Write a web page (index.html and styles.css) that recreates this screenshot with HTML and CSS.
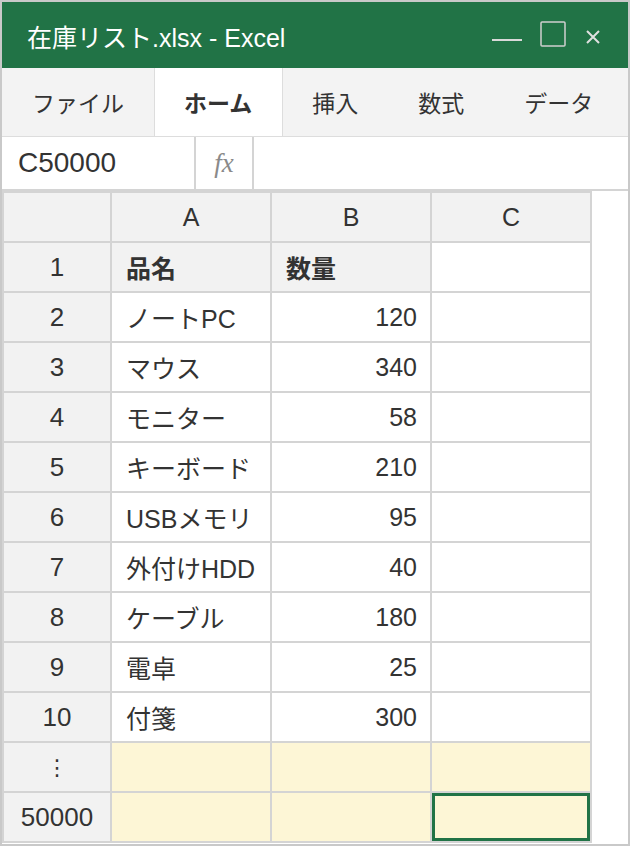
FILE: index.html
```html
<!DOCTYPE html>
<html lang="ja">
<head>
    <meta charset="UTF-8">
    <meta name="viewport" content="width=device-width, initial-scale=1.0">
    <title>在庫リスト.xlsx - Excel</title>
    <link rel="stylesheet" href="styles.css">
</head>
<body>
    <div class="window">
        <div class="titlebar">
            <span class="title">在庫リスト.xlsx - Excel</span>
            <div class="controls">
                <svg width="32" height="24" viewBox="0 0 32 24"><line x1="1" y1="17" x2="31" y2="17" stroke="#d9d9d9" stroke-width="2"/></svg>
                <svg width="26" height="26" viewBox="0 0 26 26"><rect x="1" y="1" width="24" height="24" rx="1" fill="none" stroke="#cfcfcf" stroke-width="1.5"/></svg>
                <svg width="14" height="14" viewBox="0 0 14 14"><path d="M1 1 L13 13 M13 1 L1 13" stroke="#e0e0e0" stroke-width="2"/></svg>
            </div>
        </div>

        <div class="tabs">
            <div class="tab">ファイル</div>
            <div class="tab active">ホーム</div>
            <div class="tab">挿入</div>
            <div class="tab">数式</div>
            <div class="tab">データ</div>
        </div>

        <div class="formulabar">
            <div class="namebox">C50000</div>
            <div class="fx">fx</div>
            <div class="input"></div>
        </div>

        <div class="sheet">
            <div class="corner"></div>
            <div class="colhead">A</div>
            <div class="colhead">B</div>
            <div class="colhead">C</div>

            <div class="rowhead">1</div>
            <div class="cell label">品名</div>
            <div class="cell label">数量</div>
            <div class="cell"></div>

            <div class="rowhead">2</div>
            <div class="cell">ノートPC</div>
            <div class="cell num">120</div>
            <div class="cell"></div>

            <div class="rowhead">3</div>
            <div class="cell">マウス</div>
            <div class="cell num">340</div>
            <div class="cell"></div>

            <div class="rowhead">4</div>
            <div class="cell">モニター</div>
            <div class="cell num">58</div>
            <div class="cell"></div>

            <div class="rowhead">5</div>
            <div class="cell">キーボード</div>
            <div class="cell num">210</div>
            <div class="cell"></div>

            <div class="rowhead">6</div>
            <div class="cell">USBメモリ</div>
            <div class="cell num">95</div>
            <div class="cell"></div>

            <div class="rowhead">7</div>
            <div class="cell">外付けHDD</div>
            <div class="cell num">40</div>
            <div class="cell"></div>

            <div class="rowhead">8</div>
            <div class="cell">ケーブル</div>
            <div class="cell num">180</div>
            <div class="cell"></div>

            <div class="rowhead">9</div>
            <div class="cell">電卓</div>
            <div class="cell num">25</div>
            <div class="cell"></div>

            <div class="rowhead">10</div>
            <div class="cell">付箋</div>
            <div class="cell num">300</div>
            <div class="cell"></div>

            <div class="rowhead dots">⋮</div>
            <div class="cell filled"></div>
            <div class="cell filled"></div>
            <div class="cell filled"></div>

            <div class="rowhead">50000</div>
            <div class="cell filled"></div>
            <div class="cell filled"></div>
            <div class="cell filled selected"></div>
        </div>
    </div>
</body>
</html>
```

FILE: styles.css
```css
body {
    margin: 0;
    padding: 0;
    font-family: "Liberation Sans", "Noto Sans CJK JP", sans-serif;
    color: #333333;
    background-color: #ffffff;
}

.window {
    width: 630px;
    height: 846px;
    box-sizing: border-box;
    border: 2px solid #c9c9c9;
    background-color: #ffffff;
    overflow: hidden;
}

/* Title bar */
.titlebar {
    height: 66px;
    background-color: #217346;
    display: flex;
    align-items: center;
    justify-content: space-between;
    padding: 0 28px 0 25px;
}

.title {
    color: #ffffff;
    font-family: "Liberation Sans", "Noto Sans CJK JP", sans-serif;
    font-size: 25px;
    margin-top: 2px;
}

.controls {
    display: flex;
    align-items: center;
    gap: 17px;
    margin-top: -2px;
}

.controls svg {
    display: block;
}

.controls svg:first-child {
    margin-top: 2px;
}

.controls svg:last-child {
    margin-left: 3px;
    margin-top: 5px;
}

/* Ribbon tabs */
.tabs {
    height: 68px;
    background-color: #f3f3f3;
    border-bottom: 1px solid #dddddd;
    display: flex;
}

.tab {
    padding: 0 30px;
    display: flex;
    align-items: center;
    font-family: "Noto Sans CJK JP", sans-serif;
    font-size: 23px;
    color: #333333;
}

.tab.active {
    background-color: #ffffff;
    font-weight: bold;
    border-left: 1px solid #dddddd;
    border-right: 1px solid #dddddd;
    padding: 0 30px 0 29px;
}

.tab.active + .tab {
    padding-left: 29px;
}

/* Name box and formula bar */
.formulabar {
    height: 52px;
    display: flex;
    border-bottom: 2px solid #d4d4d4;
}

.namebox {
    width: 176px;
    padding-left: 16px;
    border-right: 2px solid #d4d4d4;
    display: flex;
    align-items: center;
    font-size: 28px;
    color: #333333;
}

.fx {
    width: 56px;
    border-right: 2px solid #d4d4d4;
    display: flex;
    align-items: center;
    justify-content: center;
    font-family: "Liberation Serif", serif;
    font-style: italic;
    font-size: 27px;
    color: #8a8a8a;
}

.input {
    flex: 1;
}

/* Worksheet grid */
.sheet {
    display: grid;
    grid-template-columns: 106px 158px 158px 158px;
    grid-auto-rows: 48px;
    gap: 2px;
    padding: 2px;
    width: fit-content;
    background-color: #d4d4d4;
    font-size: 25px;
}

.corner,
.colhead,
.rowhead {
    background-color: #f2f2f2;
    display: flex;
    align-items: center;
    justify-content: center;
    color: #333333;
}

.rowhead {
    font-size: 26px;
}

.cell {
    background-color: #ffffff;
    display: flex;
    align-items: center;
    padding: 0 14px;
    white-space: nowrap;
}

.cell.label {
    background-color: #f2f2f2;
    font-weight: bold;
}

.cell.num {
    justify-content: flex-end;
    padding-right: 13px;
}

.cell.filled {
    background-color: #fdf6d6;
}

.cell.selected {
    box-shadow: inset 0 0 0 3px #217346;
}

.rowhead.dots {
    font-family: "DejaVu Sans", sans-serif;
    font-size: 22px;
}
```
